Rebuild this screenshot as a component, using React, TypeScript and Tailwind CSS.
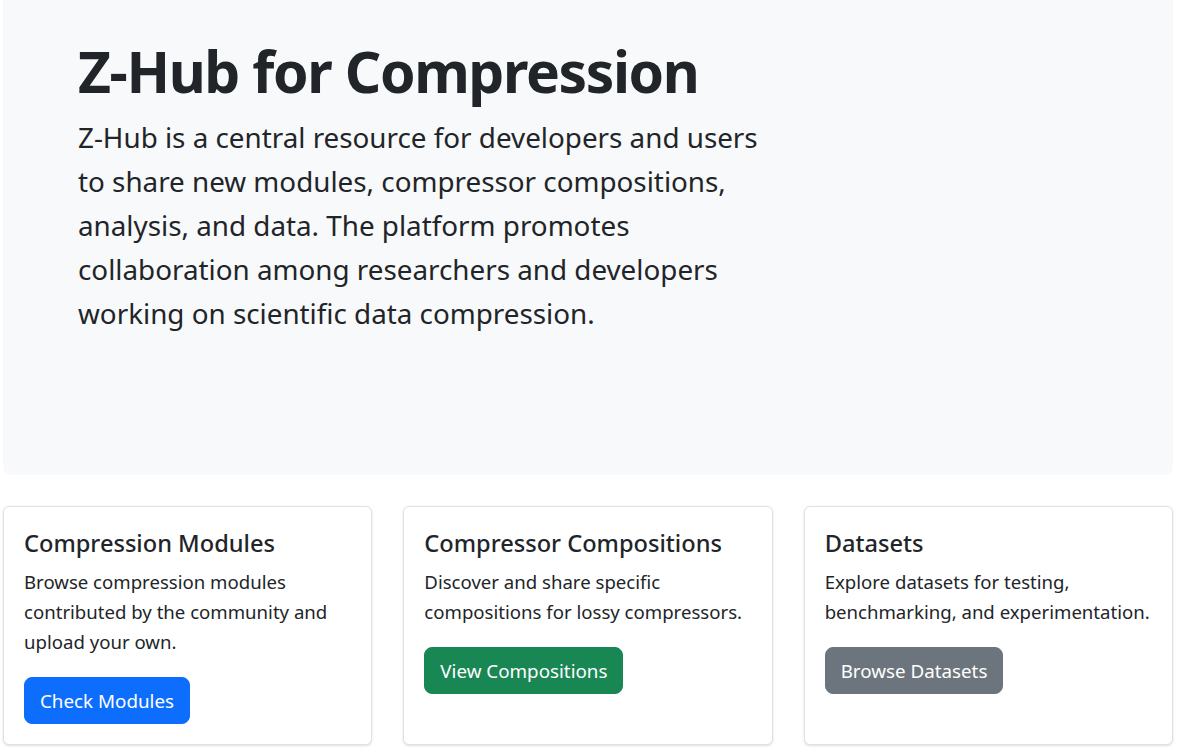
export default function App() {
    const cards = [
        {
            title: "Compression Modules",
            text: "Browse compression modules contributed by the community and upload your own.",
            button: "Check Modules",
            color: "bg-[#0d6efd] border-[#0d6efd]",
        },
        {
            title: "Compressor Compositions",
            text: "Discover and share specific compositions for lossy compressors.",
            button: "View Compositions",
            color: "bg-[#198754] border-[#198754]",
        },
        {
            title: "Datasets",
            text: "Explore datasets for testing, benchmarking, and experimentation.",
            button: "Browse Datasets",
            color: "bg-[#6c757d] border-[#6c757d]",
        },
    ];

    return (
        <div className="min-h-screen bg-white font-['Noto_Sans',sans-serif] text-[#212529]">
            <div className="ml-[3px] w-[1170px]">
                {/* Hero */}
                <div className="h-[475px] rounded-b-lg bg-[#f8f9fa] pl-[75px] pt-[36px]">
                    <h1 className="mb-[9px] text-[57px] font-bold leading-[70px] tracking-[-1.4px]">Z-Hub for Compression</h1>
                    <p className="w-[700px] text-[27.8px] leading-[44px]">
                        Z-Hub is a central resource for developers and users to share new modules, compressor compositions,
                        analysis, and data. The platform promotes collaboration among researchers and developers working on
                        scientific data compression.
                    </p>
                </div>

                {/* Cards */}
                <div className="mt-[31px] grid grid-cols-3 gap-[31px]">
                    {cards.map((c) => (
                        <div key={c.title} className="flex flex-col rounded-md border border-[#dee2e6] bg-white px-5 pt-[22px] pb-5 shadow-sm">
                            <h4 className="mb-[10px] text-[23.6px] font-medium leading-[1.2]">{c.title}</h4>
                            <p className="mb-5 text-[18.6px] leading-[30px]">{c.text}</p>
                            <div>
                                <button className={`h-[47px] rounded-lg border px-[15px] text-[18.8px] leading-[30px] text-white ${c.color}`}>
                                    {c.button}
                                </button>
                            </div>
                        </div>
                    ))}
                </div>
            </div>
        </div>
    );
}
